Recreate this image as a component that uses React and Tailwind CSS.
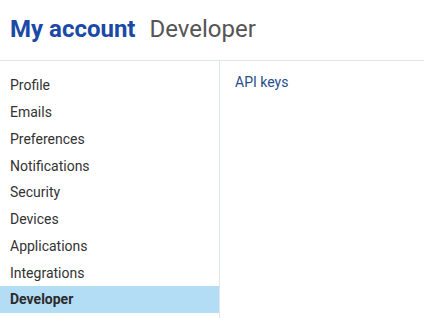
const items = [
  "Profile",
  "Emails",
  "Preferences",
  "Notifications",
  "Security",
  "Devices",
  "Applications",
  "Integrations",
  "Developer",
];

export default function App() {
  return (
    <div className="h-[318px] w-[424px] overflow-hidden bg-white font-['Roboto',sans-serif]">
      <header className="flex h-[61px] items-center gap-[14px] border-b border-[#dde5ee] pl-[10px] pb-[2px]">
        <h1 className="text-[24px] font-bold text-[#1a4aa6]">My account</h1>
        <span className="text-[24px] text-[#555555]">Developer</span>
      </header>
      <div className="flex">
        <nav className="flex w-[220px] flex-col border-r border-[#dde5ee] pt-[11px]">
          {items.map((item) => (
            <a
              key={item}
              className={
                item === "Developer"
                  ? "flex h-[27px] items-center bg-[#b3dcf5] pl-[10px] text-[14px] font-bold text-[#2b2b2b]"
                  : "flex h-[26.75px] items-center pl-[10px] pt-[1px] text-[14px] text-[#333333]"
              }
            >
              {item}
            </a>
          ))}
          <div className="h-[10px]" />
        </nav>
        <main className="flex-1 pl-[15px] pt-[9px]">
          <a className="text-[14px] text-[#1f4f8c]">API keys</a>
        </main>
      </div>
    </div>
  );
}
